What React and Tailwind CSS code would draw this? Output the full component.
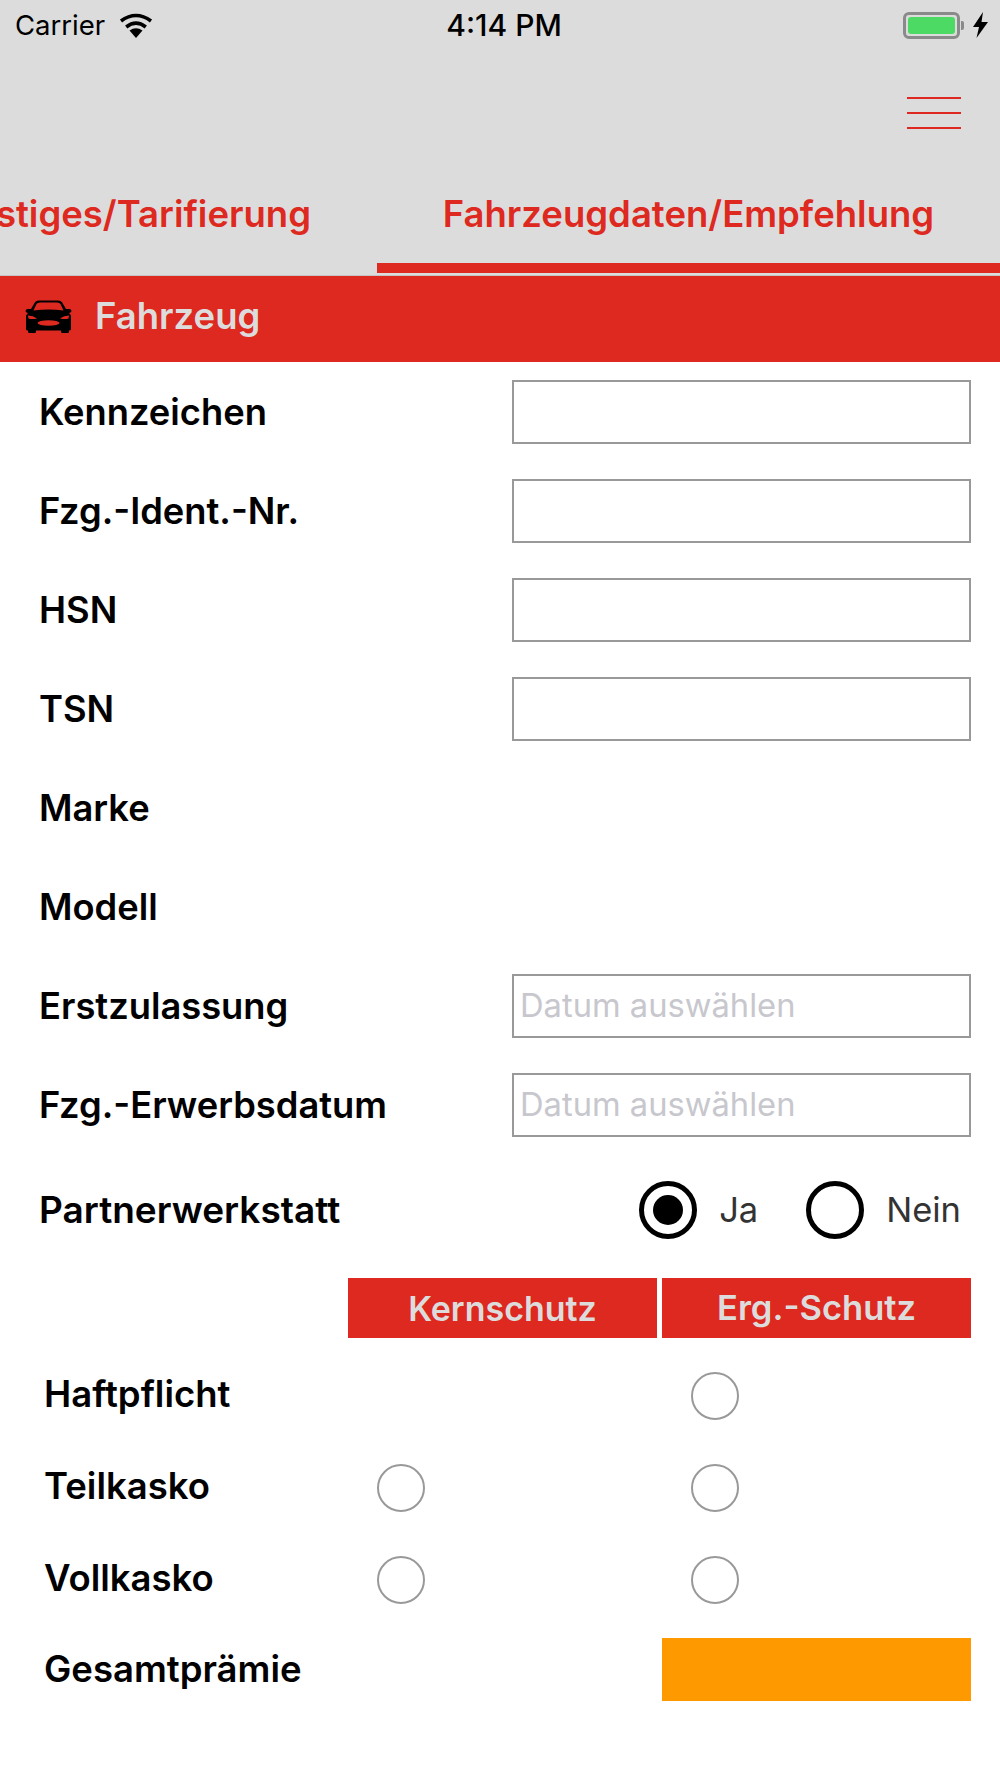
import React from 'react';

const RED = 'text-[#de2920]';

function Wifi() {
  return (
    <svg width="34" height="25" viewBox="0 0 34 25" className="ml-[14px]">
      <path d="M17 25 L10.5 17.6 Q17 12.8 23.5 17.6 Z" fill="#000" />
      <path d="M7.2 14 Q17 6.4 26.8 14" fill="none" stroke="#000" strokeWidth="3.6" />
      <path d="M2 8 Q17 -3 32 8" fill="none" stroke="#000" strokeWidth="3.6" />
    </svg>
  );
}

function Battery() {
  return (
    <div className="flex items-center">
      <div className="w-[57px] h-[27px] rounded-[6px] border-[3px] border-[#8a8a8a] p-[2px]">
        <div className="w-full h-full rounded-[3px] bg-[#4cd964]" />
      </div>
      <div className="w-[3px] h-[9px] ml-[1px] rounded-r-[2px] bg-[#8a8a8a]" />
      <svg width="15" height="26" viewBox="0 0 15 26" className="ml-[9px]">
        <path d="M10 0 L0 15 H6 L3.5 26 L15 10 H8.5 Z" fill="#000" />
      </svg>
    </div>
  );
}

function CarIcon() {
  return (
    <svg width="47" height="34" viewBox="0 0 47 34" className="shrink-0">
      <path
        d="M9.5 3 Q10.5 0.5 14 0.5 H33 Q36.5 0.5 37.5 3 L41 9 H44 Q46.5 9 46.5 11 Q46.5 12.5 44 13 L46 15.5 V29 Q46 30.5 44 30.5 V32 Q44 33 42.5 33 H37.5 Q36 33 36 32 V30.5 H11 V32 Q11 33 9.5 33 H4.5 Q3 33 3 32 V30.5 Q1 30.5 1 29 V15.5 L3 13 Q0.5 12.5 0.5 11 Q0.5 9 3 9 H6 Z"
        fill="#000"
      />
      <path d="M11.5 4 Q12.5 2.5 15 2.5 H32 Q34.5 2.5 35.5 4 L38.5 10.5 Q23.5 8.5 8.5 10.5 Z" fill="#de2920" />
      <path d="M3 15.5 Q8 15.5 12 18.5 Q7 19.5 3.5 18.5 Z" fill="#de2920" />
      <path d="M44 15.5 Q39 15.5 35 18.5 Q40 19.5 43.5 18.5 Z" fill="#de2920" />
      <ellipse cx="23.5" cy="23" rx="11" ry="2.8" fill="#de2920" />
    </svg>
  );
}

function Field({ label, input, placeholder }) {
  return (
    <div className="h-[99px] flex items-center justify-between pl-[39px] pr-[29px]">
      <span className="pt-[1px] text-[36.3px] font-semibold text-black">{label}</span>
      {input && (
        <div className="w-[459px] h-[64px] border-2 border-[#999999] flex items-center pl-[6px] text-[32.7px] text-[#c7c7cd]">
          {placeholder}
        </div>
      )}
    </div>
  );
}

function BigRadio({ checked }) {
  return (
    <div className="w-[58px] h-[58px] rounded-full border-[5px] border-black flex items-center justify-center">
      {checked && <div className="w-[30px] h-[30px] rounded-full bg-black" />}
    </div>
  );
}

function SmallRadio() {
  return <div className="w-[48px] h-[48px] rounded-full border-2 border-[#999999]" />;
}

function CoverRow({ label, core, extra }) {
  return (
    <div className="h-[92px] flex items-center">
      <span className="w-[348px] pl-[44px] pb-[3px] text-[36.5px] font-semibold text-black">{label}</span>
      <div className="w-[314px] pl-[29px]">{core && <SmallRadio />}</div>
      <div className="pl-[29px]">{extra && <SmallRadio />}</div>
    </div>
  );
}

export default function App() {
  return (
    <div className="w-[1000px] h-[1778px] bg-white overflow-hidden font-['Inter',sans-serif]">
      <header className="bg-[#dcdcdc] h-[276px] border-b border-[#c4c4c4]">
        <div className="h-[50px] flex items-center justify-between pl-[15px] pr-[12px] text-black">
          <div className="flex items-center w-[330px]">
            <span className="pt-[1px] text-[27.5px]">Carrier</span>
            <Wifi />
          </div>
          <span className="pl-[5px] text-[30px] font-medium">4:14 PM</span>
          <div className="w-[330px] flex justify-end">
            <Battery />
          </div>
        </div>
        <div className="h-[96px] flex justify-end pt-[47px] pr-[39px]">
          <div className="w-[54px] flex flex-col gap-[13px]">
            <div className="h-[2px] bg-[#de2920]" />
            <div className="h-[2px] bg-[#de2920]" />
            <div className="h-[2px] bg-[#de2920]" />
          </div>
        </div>
        <div className={`flex h-[129px] overflow-hidden text-[36.5px] font-semibold whitespace-nowrap ${RED}`}>
          <div className="w-[377px] shrink-0 flex justify-end pr-[66px] pt-[41px]">
            <span>Sonstiges/Tarifierung</span>
          </div>
          <div className="flex-1 h-[127px] pt-[41px] text-center border-b-[10px] border-[#de2920]">
            Fahrzeugdaten/Empfehlung
          </div>
        </div>
      </header>

      <div className="h-[86px] bg-[#de2920] flex items-center pl-[25px] pb-[5px] gap-[23px]">
        <CarIcon />
        <span className="text-[36.5px] font-semibold text-[#dcdcdc]">Fahrzeug</span>
      </div>

      <div>
        <Field label="Kennzeichen" input />
        <Field label="Fzg.-Ident.-Nr." input />
        <Field label="HSN" input />
        <Field label="TSN" input />
        <Field label="Marke" />
        <Field label="Modell" />
        <Field label="Erstzulassung" input placeholder="Datum auswählen" />
        <Field label="Fzg.-Erwerbsdatum" input placeholder="Datum auswählen" />

        <div className="h-[112px] flex items-center pl-[39px] pr-[39px]">
          <span className="text-[37px] font-semibold text-black flex-1">Partnerwerkstatt</span>
          <BigRadio checked />
          <span className="ml-[22px] w-[87px] text-[34.5px] text-[#333333]">Ja</span>
          <BigRadio />
          <span className="ml-[22px] text-[34.5px] text-[#333333]">Nein</span>
        </div>

        <div className="flex gap-[5px] pl-[348px] mt-[12px]">
          <div className="w-[309px] h-[60px] bg-[#de2920] flex items-center justify-center text-[34px] font-semibold text-[#dcdcdc]">
            Kernschutz
          </div>
          <div className="w-[309px] h-[60px] bg-[#de2920] flex items-center justify-center text-[34.5px] font-semibold text-[#dcdcdc]">
            Erg.-Schutz
          </div>
        </div>

        <div className="pt-[12px]">
          <CoverRow label="Haftpflicht" extra />
          <CoverRow label="Teilkasko" core extra />
          <CoverRow label="Vollkasko" core extra />
          <div className="h-[63px] mt-[12px] flex items-center">
            <span className="w-[662px] pl-[44px] text-[36.5px] font-semibold text-black">Gesamtprämie</span>
            <div className="w-[309px] h-[63px] bg-[#ff9900]" />
          </div>
        </div>
      </div>
    </div>
  );
}
